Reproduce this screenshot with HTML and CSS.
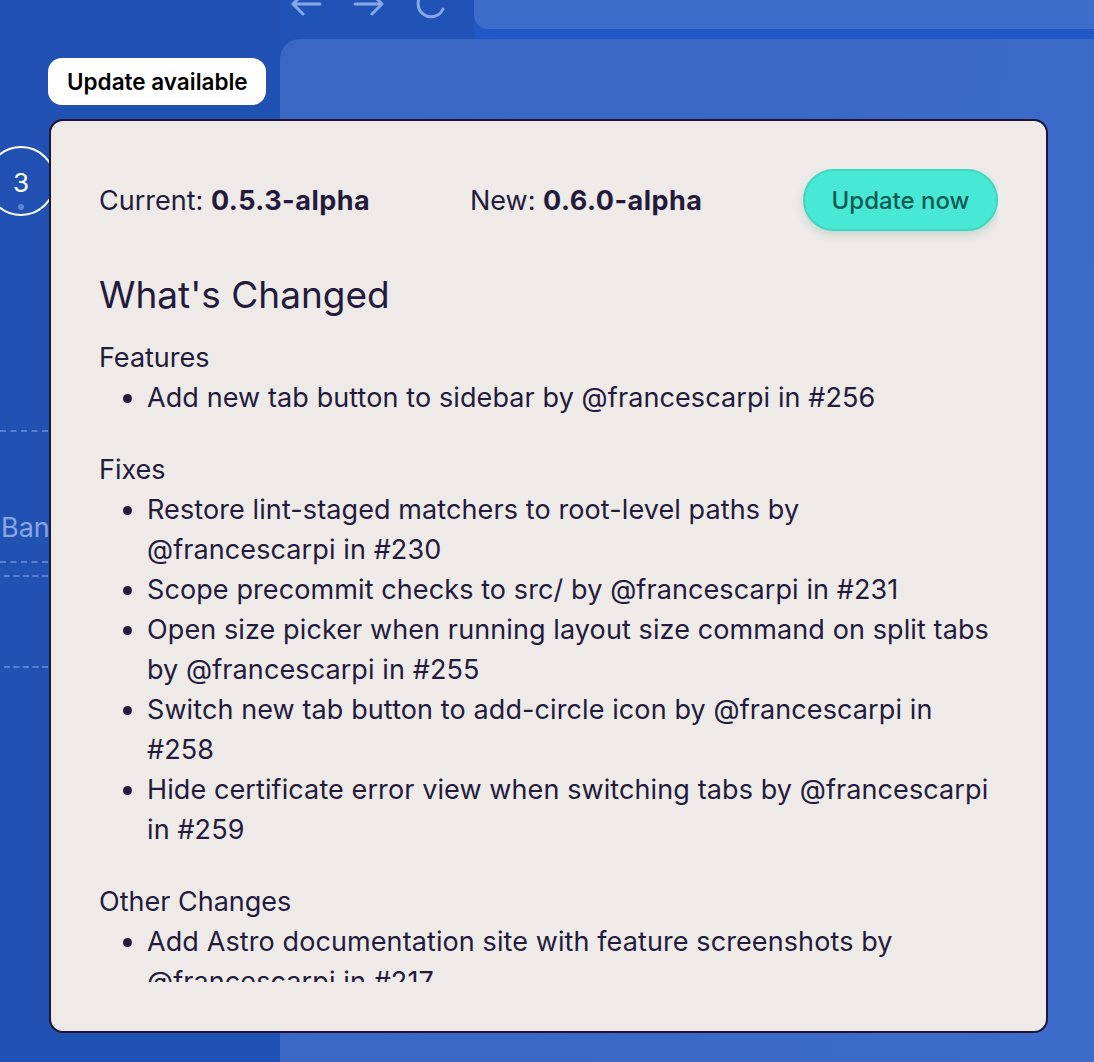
FILE: index.html
```html
<!DOCTYPE html>
<html>
<head>
<meta charset="utf-8">
<link rel="stylesheet" href="styles.css">
</head>
<body>
<div class="app">
  <aside class="sidebar">
    <div class="space-circle">
      <span class="space-num">3</span>
      <span class="space-dot"></span>
    </div>
    <div class="dash d1"></div>
    <div class="tab-label">Ban</div>
    <div class="dash d2"></div>
    <div class="dash d3"></div>
    <div class="dash d4"></div>
  </aside>
  <main class="main">
    <div class="toolbar">
      <div class="nav">
        <svg class="nav-icon" viewBox="0 0 32 32" width="32" height="32"><path d="M30 16H3M13 6L3 16l10 10" fill="none" stroke="currentColor" stroke-width="3" stroke-linecap="round" stroke-linejoin="round"/></svg>
        <svg class="nav-icon" viewBox="0 0 32 32" width="32" height="32"><path d="M2 16h27M19 6l10 10-10 10" fill="none" stroke="currentColor" stroke-width="3" stroke-linecap="round" stroke-linejoin="round"/></svg>
        <svg class="nav-icon reload" viewBox="0 0 32 32" width="32" height="32"><path d="M27 21A13 13 0 1 1 26.5 9.5M28 2v8.5h-8.5" fill="none" stroke="currentColor" stroke-width="3" stroke-linecap="round" stroke-linejoin="round"/></svg>
      </div>
      <div class="address-wrap"><div class="address"></div></div>
    </div>
    <div class="content"></div>
  </main>
</div>

<div class="badge">Update available</div>

<section class="modal">
  <div class="modal-scroll">
    <div class="modal-head">
      <div class="ver ver-current">Current: <b>0.5.3-alpha</b></div>
      <div class="ver">New: <b>0.6.0-alpha</b></div>
      <button class="update-btn">Update now</button>
    </div>
    <h1 class="title">What's Changed</h1>
    <h3 class="group">Features</h3>
    <ul class="items">
      <li>Add new tab button to sidebar by @francescarpi in #256</li>
    </ul>
    <h3 class="group">Fixes</h3>
    <ul class="items">
      <li>Restore lint-staged matchers to root-level paths by @francescarpi in #230</li>
      <li>Scope precommit checks to src/ by @francescarpi in #231</li>
      <li>Open size picker when running layout size command on split tabs by @francescarpi in #255</li>
      <li>Switch new tab button to add-circle icon by @francescarpi in #258</li>
      <li>Hide certificate error view when switching tabs by @francescarpi in #259</li>
    </ul>
    <h3 class="group">Other Changes</h3>
    <ul class="items">
      <li>Add Astro documentation site with feature screenshots by @francescarpi in #217</li>
      <li>Update dependencies by @francescarpi in #260</li>
    </ul>
  </div>
</section>
</body>
</html>
```

FILE: styles.css
```css
* { box-sizing: border-box; }
html, body { margin: 0; padding: 0; }
body {
  width: 1094px;
  height: 1062px;
  overflow: hidden;
  background: #2151b4;
  font-family: Inter, "Noto Sans", "DejaVu Sans", sans-serif;
  position: relative;
}
.app {
  display: grid;
  grid-template-columns: 280px 1fr;
  height: 1062px;
}
.sidebar {
  display: flex;
  flex-direction: column;
  align-items: flex-start;
  padding-top: 146px;
  background: #2151b3;
}
.space-circle {
  width: 70px;
  height: 70px;
  margin-left: -14px;
  border: 2px solid #ffffff;
  border-radius: 50%;
  display: flex;
  flex-direction: column;
  align-items: center;
  color: #fff;
}
.space-num {
  font-size: 26px;
  line-height: 30px;
  margin-top: 20px;
}
.space-dot {
  width: 6px;
  height: 6px;
  border-radius: 50%;
  background: #5e84d4;
  margin-top: 6px;
}
.dash {
  height: 0;
  border-top: 2px dashed #5a80d3;
}
.d1 { width: 48px; margin-top: 214px; }
.tab-label {
  margin-top: 79px;
  margin-left: 1px;
  font-size: 27px;
  line-height: 34px;
  color: #88a6e2;
}
.d2 { width: 48px; margin-top: 16px; }
.d3 { width: 44px; margin-left: 4px; margin-top: 12px; }
.d4 { width: 44px; margin-left: 4px; margin-top: 89px; }

.main {
  display: flex;
  flex-direction: column;
  background: #2152b5;
}
.toolbar {
  height: 39px;
  display: flex;
  align-items: flex-start;
}
.nav {
  display: flex;
  gap: 31px;
  padding-left: 10px;
  width: 194px;
  margin-top: -12px;
  color: #86a8e6;
}
.nav-icon { display: block; flex: none; }
.address-wrap {
  flex: 1;
  height: 39px;
  background: #2058c8;
}
.address {
  height: 29px;
  background: #3d6dcb;
  border-bottom-left-radius: 14px;
}
.content {
  flex: 1;
  background: linear-gradient(100deg, #3a66c4 0%, #3d6bc9 100%);
  border-top-left-radius: 20px;
}

.badge {
  position: absolute;
  left: 48px;
  top: 58px;
  width: 218px;
  height: 47px;
  border-radius: 14px;
  background: #ffffff;
  color: #000;
  font-size: 22.5px;
  font-weight: 600;
  line-height: 47px;
  padding-left: 19px;
}

.modal {
  position: absolute;
  left: 49px;
  top: 119px;
  width: 999px;
  height: 914px;
  background: #edeae7;
  border: 2px solid #1e1535;
  border-radius: 14px;
  padding: 48px 48px 49px 48px;
  color: #241a3c;
}
.modal-scroll {
  height: 100%;
  overflow: hidden;
}
.modal-head {
  display: flex;
  align-items: center;
  height: 62px;
}
.ver {
  font-size: 27px;
  line-height: 32px;
  padding-top: 2px;
}
.ver b { font-weight: 700; letter-spacing: 0.5px; }
.ver-current { width: 371px; }
.update-btn {
  margin-left: auto;
  width: 195px;
  height: 62px;
  border-radius: 31px;
  border: 2px solid #3cd8c2;
  background: #47e9d5;
  color: #0c5a54;
  font-family: inherit;
  font-size: 24px;
  font-weight: 500;
  box-shadow: 0 4px 8px rgba(40, 120, 110, 0.18);
  padding: 0;
}
.title {
  margin: 41px 0 0;
  font-size: 37px;
  font-weight: 400;
  line-height: 46px;
}
.group {
  margin: 0;
  font-size: 27px;
  font-weight: 400;
  line-height: 40px;
}
.title + .group { margin-top: 20px; }
.items + .group { margin-top: 32px; }
.items {
  margin: 0;
  padding-left: 48px;
  padding-right: 6px;
  font-size: 27px;
  line-height: 40px;
  letter-spacing: 0.1px;
}
```
